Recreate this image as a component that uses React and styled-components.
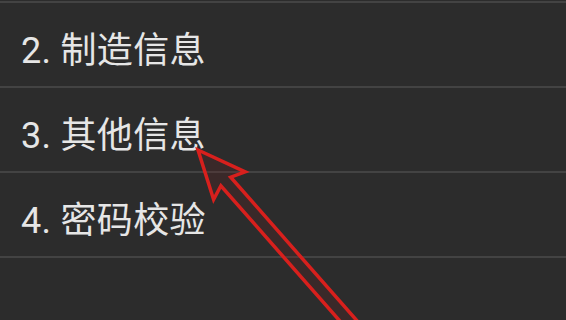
import React from "react";
import styled, { createGlobalStyle } from "styled-components";

const Global = createGlobalStyle`
  html, body { margin: 0; padding: 0; background: #2c2c2c; }
  body { width: 566px; height: 320px; overflow: hidden; }
  #root { height: 100%; }
`;

const Page = styled.div`
  position: relative;
  width: 566px;
  height: 320px;
  background: #2c2c2c;
  padding-top: 1px;
  box-sizing: border-box;
  overflow: hidden;
`;

const List = styled.ul`
  list-style: none;
  margin: 0;
  padding: 0;
  border-top: 2px solid #434343;
`;

const Row = styled.li`
  height: 85px;
  box-sizing: border-box;
  padding: 5px 0 0 21px;
  display: flex;
  align-items: center;
  border-bottom: 2px solid #434343;
  font-family: Roboto, "Noto Sans CJK SC", sans-serif;
  font-size: 36px;
  color: #e6e6e6;
  letter-spacing: 0.3px;
`;

const Overlay = styled.svg`
  position: absolute;
  left: 0;
  top: 0;
  width: 566px;
  height: 320px;
  pointer-events: none;
`;

const items = ["2. 制造信息", "3. 其他信息", "4. 密码校验"];

export default function App() {
  return (
    <>
      <Global />
      <Page>
        <List>
          {items.map((t) => (
            <Row key={t}>{t}</Row>
          ))}
        </List>
        <Overlay viewBox="0 0 566 320">
          <polygon
            points="198,150 245.2,171.8 230.7,177.2 374.8,341 365,349.6 220.9,185.8 213.6,199.6"
            fill="rgba(120,25,25,0.18)"
            stroke="#d8201d"
            strokeWidth="3.5"
            strokeLinejoin="miter"
            strokeMiterlimit="10"
          />
        </Overlay>
      </Page>
    </>
  );
}
